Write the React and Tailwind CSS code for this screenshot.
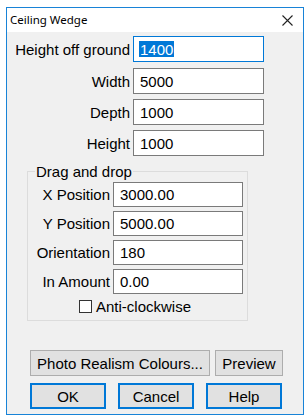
import React from "react";

const F = { fontFamily: '"Liberation Sans", Arial, sans-serif' };

function Row({ label, value, labelW, inputW, h, mt, focused }) {
  return (
    <div className="flex items-center" style={{}}>
      <div
        className={`flex items-center ${mt}`}
      >
        <span className={`${labelW} text-right text-[15px] leading-none text-[#000]`}>{label}</span>
        <div
          className={`ml-[3px] ${inputW} ${h} bg-white flex items-center pl-[6px] text-[15px] leading-none border ${
            focused ? "border-[#0078d7]" : "border-[#7a7a7a]"
          }`}
        >
          {focused ? (
            <span className="bg-[#0078d7] text-white h-[16px] flex items-center px-[1px] -ml-[1px]">{value}</span>
          ) : (
            <span className="text-black">{value}</span>
          )}
        </div>
      </div>
    </div>
  );
}

function Btn({ children, w, primary }) {
  return (
    <div
      className={`${w} h-[26px] flex items-center justify-center bg-[#e1e1e1] text-[15px] leading-none text-black ${
        primary ? "border-2 border-[#0078d7]" : "border border-[#adadad]"
      }`}
    >
      {children}
    </div>
  );
}

export default function App() {
  return (
    <div className="w-[308px] h-[420px] bg-white" style={F}>
      <div className="pt-[7px] pl-[6px]">
        <div className="w-[298px] h-[408px] border border-[#1883d7] flex flex-col">
          <div className="h-[24px] bg-white flex items-center justify-between">
            <span
              className="pl-[3px] text-[11.5px] text-[#000] leading-none"
              style={{ fontFamily: '"Noto Sans", "Open Sans", sans-serif' }}
            >
              Ceiling Wedge
            </span>
            <div className="w-[29px] h-[24px] flex items-center justify-center mr-[1px]">
              <svg width="11" height="11" viewBox="0 0 11 11">
                <path d="M0.5 0.5 L10.5 10.5 M10.5 0.5 L0.5 10.5" stroke="#222" strokeWidth="1.1" fill="none" />
              </svg>
            </div>
          </div>
          <div className="flex-1 bg-[#f0f0f0] flex flex-col">
            <Row label="Height off ground" value="1400" labelW="w-[123px]" inputW="w-[131px]" h="h-[26px]" mt="mt-[4px]" focused />
            <Row label="Width" value="5000" labelW="w-[123px]" inputW="w-[131px]" h="h-[26px]" mt="mt-[6px]" />
            <Row label="Depth" value="1000" labelW="w-[123px]" inputW="w-[131px]" h="h-[26px]" mt="mt-[5px]" />
            <Row label="Height" value="1000" labelW="w-[123px]" inputW="w-[131px]" h="h-[26px]" mt="mt-[5px]" />

            <div className="ml-[20px] mt-[15px] w-[221px] h-[150px] border border-[#dcdcdc] relative flex flex-col">
              <span className="absolute left-[7px] -top-[9px] bg-[#f0f0f0] px-[1px] text-[15px] leading-[17px] text-black">
                Drag and drop
              </span>
              <Row label="X Position" value="3000.00" labelW="w-[82px]" inputW="w-[130px]" h="h-[25px]" mt="mt-[10px]" />
              <Row label="Y Position" value="5000.00" labelW="w-[82px]" inputW="w-[130px]" h="h-[25px]" mt="mt-[4px]" />
              <Row label="Orientation" value="180" labelW="w-[82px]" inputW="w-[130px]" h="h-[25px]" mt="mt-[4px]" />
              <Row label="In Amount" value="0.00" labelW="w-[82px]" inputW="w-[130px]" h="h-[25px]" mt="mt-[4px]" />
              <div className="flex items-center mt-[5px] ml-[51px]">
                <div className="w-[13px] h-[13px] border border-[#333] bg-white" />
                <span className="ml-[4px] text-[15px] leading-none text-black">Anti-clockwise</span>
              </div>
            </div>

            <div className="flex ml-[23px] mt-[29px] gap-[5px]">
              <Btn w="w-[180px]">Photo Realism Colours...</Btn>
              <Btn w="w-[68px]">Preview</Btn>
            </div>
            <div className="flex ml-[23px] mt-[7px] gap-[12px]">
              <Btn w="w-[76px]" primary>OK</Btn>
              <Btn w="w-[76px]" primary>Cancel</Btn>
              <Btn w="w-[76px]" primary>Help</Btn>
            </div>
          </div>
        </div>
      </div>
    </div>
  );
}
